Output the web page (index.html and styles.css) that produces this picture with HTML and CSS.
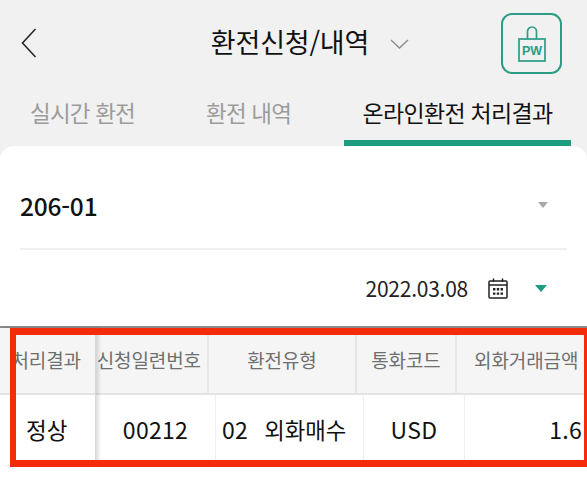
FILE: index.html
```html
<!DOCTYPE html>
<html lang="ko">
<head>
<meta charset="utf-8">
<title>환전신청/내역</title>
<link rel="stylesheet" href="styles.css">
</head>
<body>
<div class="screen">
  <header class="top">
    <div class="titlebar">
      <svg class="back" width="16" height="30" viewBox="0 0 16 30"><path d="M14.5 1 L1.5 15 L14.5 29" fill="none" stroke="#222" stroke-width="1.5"/></svg>
      <div class="title">
        <h1>환전신청/내역</h1>
        <svg class="chev" width="19" height="10" viewBox="0 0 19 10"><path d="M1 1 L9.5 9 L18 1" fill="none" stroke="#8a8a8a" stroke-width="1.3"/></svg>
      </div>
      <button class="pw" type="button">
        <svg width="28" height="36" viewBox="0 0 28 36"><path d="M9.5 13 V5.5 a4.5 4.5 0 0 1 9 0 V13" fill="none" stroke="#2a9d84" stroke-width="1.7"/><rect x="1" y="13" width="26" height="22" fill="none" stroke="#2a9d84" stroke-width="1.7"/><text x="14" y="29" text-anchor="middle" class="pwtext">PW</text></svg>
      </button>
    </div>
    <nav class="tabs">
      <a class="tab tab1">실시간 환전</a>
      <a class="tab tab2">환전 내역</a>
      <a class="tab tab3 active">온라인환전 처리결과</a>
    </nav>
  </header>
  <main class="card">
    <div class="select">
      <span class="acct">206-01</span>
      <i class="tri tri-gray"></i>
    </div>
    <div class="dateline">
      <span class="date">2022.03.08</span>
      <svg class="cal" width="20" height="21" viewBox="0 0 20 21"><rect x="1" y="3" width="18" height="17" rx="1" fill="none" stroke="#222" stroke-width="1.5"/><path d="M1 7 H19 M5.5 0.5 V4 M14.5 0.5 V4" stroke="#222" stroke-width="1.5" fill="none"/><path d="M5 10 h2.4 v2.4 h-2.4z M8.8 10 h2.4 v2.4 h-2.4z M12.6 10 h2.4 v2.4 h-2.4z M5 14.4 h2.4 v2.4 h-2.4z M8.8 14.4 h2.4 v2.4 h-2.4z M12.6 14.4 h2.4 v2.4 h-2.4z" fill="#222"/></svg>
      <i class="tri tri-green"></i>
    </div>
    <section class="table">
      <div class="frozen">
        <div class="th th-frozen"><span>처리결과</span></div>
        <div class="td td-frozen">정상</div>
      </div>
      <div class="scroll">
        <div class="headrow">
          <div class="th h2"><span>신청일련번호</span></div>
          <div class="th h3">환전유형</div>
          <div class="th h4">통화코드</div>
          <div class="th h5">외화거래금액</div>
        </div>
        <div class="bodyrow">
          <div class="td d2">00212</div>
          <div class="td d3"><span>02</span><span class="kind">외화매수</span></div>
          <div class="td d4">USD</div>
          <div class="td d5">1.6</div>
        </div>
      </div>
      <div class="highlight"></div>
    </section>
  </main>
</div>
</body>
</html>
```

FILE: styles.css
```css
* { box-sizing: border-box; }
html, body { margin: 0; padding: 0; background: #fff; }
body { font-family: "Noto Sans CJK KR", "Noto Sans", sans-serif; color: #111; }
.screen { width: 587px; height: 487px; overflow: hidden; background: #f1f1f1; }

.top { height: 146px; }
.titlebar { height: 88px; padding: 13px 25px 0 21px; display: flex; align-items: flex-start; }
.back { margin-top: 15px; }
.title { flex: 1; display: flex; align-items: center; justify-content: center; gap: 21px; height: 58px; padding-left: 82px; }
.title h1 { margin: 0; font-size: 27px; font-weight: 400; letter-spacing: -0.2px; line-height: 58px; color: #111; white-space: nowrap; }
.chev { margin-top: 4px; }
.pw { width: 61px; height: 61px; padding: 0; background: transparent; border: 2px solid #2a9d84; border-radius: 11px; display: flex; align-items: center; justify-content: center; }
.pwtext { font-family: "Liberation Sans", sans-serif; font-size: 12.5px; font-weight: 700; fill: #2a9d84; }

.tabs { display: flex; height: 58px; }
.tab { display: block; font-size: 22.5px; letter-spacing: -0.8px; color: #9c9c9c; line-height: 48px; white-space: nowrap; }
.tab1 { margin-left: 30px; width: 176px; }
.tab2 { width: 138px; }
.tab3 { width: 227px; text-align: center; color: #111; font-size: 23px; letter-spacing: -0.7px; border-bottom: 6px solid #1d9d80; height: 58px; }

.card { height: 341px; background: #fff; border-radius: 14px 14px 0 0; position: relative; }
.select { height: 104px; margin: 0 20px; padding: 16px 19px 0 0; border-bottom: 2px solid #f0f0f0; display: flex; align-items: center; justify-content: space-between; }
.acct { font-size: 24.5px; font-weight: 500; letter-spacing: -0.2px; color: #111; }
.tri { display: block; width: 0; height: 0; border-style: solid; border-color: transparent; }
.tri-gray { border-width: 6px 5px 0; border-top-color: #a8a8a8; }
.tri-green { border-width: 7px 6px 0; border-top-color: #1d9d80; margin-left: 27px; }
.dateline { height: 76px; padding: 0 40px 0 0; display: flex; align-items: center; justify-content: flex-end; }
.date { font-size: 21px; letter-spacing: -0.25px; color: #222; margin-right: 20px; }

.table { display: flex; height: 139px; border-top: 2px solid #8a8a8a; position: relative; }
.frozen { width: 96px; flex: none; border-right: 1px solid #d8d8d8; box-shadow: 3px 0 3px rgba(0,0,0,.12); position: relative; z-index: 1; background: #fff; }
.scroll { flex: 1; overflow: hidden; }
.headrow, .bodyrow { display: flex; }
.th { height: 67px; background: #f5f5f5; border-bottom: 2px solid #e4e4e4; border-right: 2px solid #e6e6e6; color: #6f6f6f; font-size: 19px; letter-spacing: -0.1px; display: flex; align-items: center; justify-content: center; white-space: nowrap; padding-bottom: 3px; flex: none; }
.th span { display: block; }
.th-frozen { width: 95px; overflow: hidden; justify-content: flex-end; padding-right: 14px; border-right: 0; }
.h2 { width: 113px; overflow: hidden; justify-content: flex-end; padding-right: 6px; }
.h3 { width: 148px; }
.h4 { width: 100px; }
.h5 { width: 130px; border-right: 0; justify-content: flex-start; padding-left: 17px; }
.td { height: 70px; display: flex; align-items: center; justify-content: center; font-size: 23px; letter-spacing: 0.3px; color: #111; border-right: 1px solid #efefef; white-space: nowrap; padding-bottom: 2px; flex: none; }
.td-frozen { width: 95px; justify-content: flex-start; padding-left: 26px; font-size: 22.5px; letter-spacing: 0; border-right: 0; }
.d2 { width: 120px; }
.d3 { width: 148px; justify-content: flex-start; padding-left: 6px; gap: 16px; }
.kind { font-size: 22.3px; letter-spacing: 0; }
.d4 { width: 101px; }
.d5 { width: 122px; justify-content: flex-end; padding-right: 5px; border-right: 0; }
.highlight { position: absolute; left: 10px; right: -2px; top: 0; height: 139px; border-style: solid; border-color: #f52c0c; border-width: 7px 5px 7px 6px; z-index: 2; pointer-events: none; }
```
